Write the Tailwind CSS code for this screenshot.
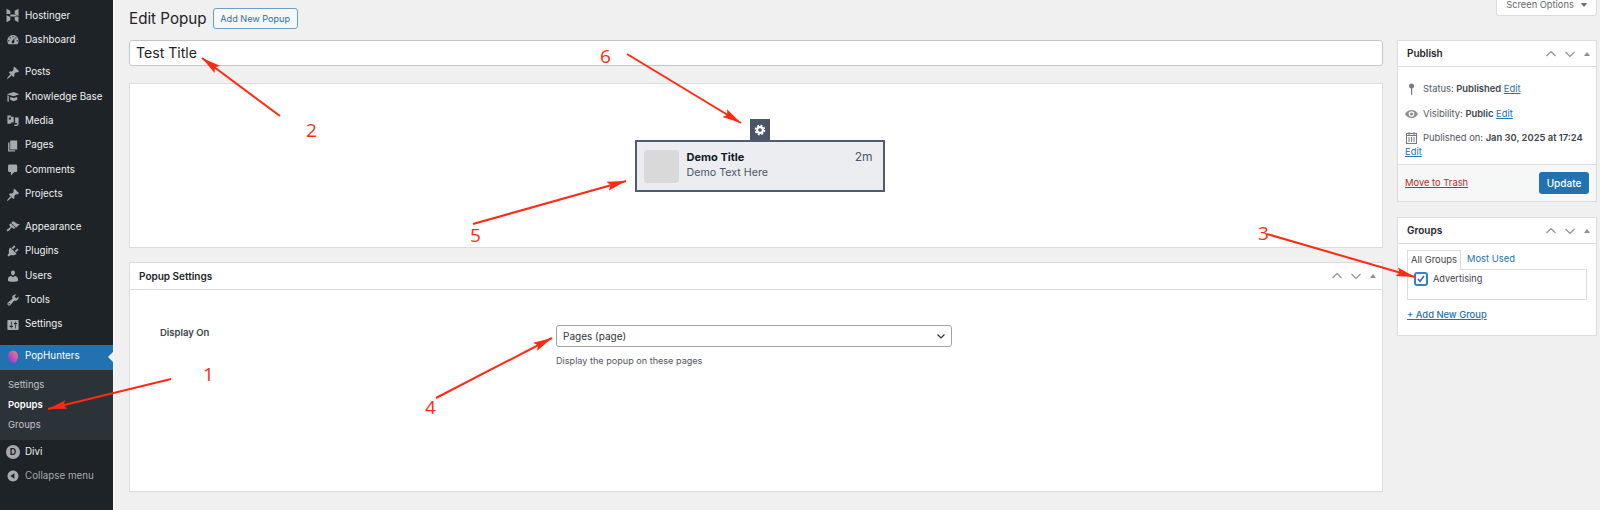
<!DOCTYPE html>
<html lang="en">
<head>
  <meta charset="UTF-8"/>
  <title>Edit Popup</title>
  <script src="https://cdn.jsdelivr.net/npm/@tailwindcss/browser@4"></script>
</head>
<body class="relative h-[510px] w-[1600px] overflow-hidden bg-[#f0f0f1] font-['Inter','Liberation_Sans',sans-serif] text-[10px] text-[#3c434a]">
  <div class="flex h-[510px]">

    <!-- Admin menu -->
    <aside class="w-[113px] shrink-0 bg-[#1d2327] pt-[4px] text-[9.8px] text-[#f0f0f1]">
      <a class="flex h-[23.8px] items-center gap-[5px] pl-[5px]">
        <svg class="h-[15px] w-[15px] fill-[#a7aaad]" viewBox="0 0 20 20"><path d="M2 1l5 2.600V8H2zM13 3.600L18 1v9.500L13 8zM2 9.500L7 12v4.400L2 19zM13 12h5v7l-5-2.600zM7 8.800h6l5 2.400H7z"/></svg>
        <span>Hostinger</span>
      </a>
      <a class="flex h-[24.4px] items-center gap-[5px] pl-[6px]">
        <svg class="h-[14px] w-[14px] fill-[#a7aaad]" viewBox="0 0 20 20"><path d="M3.76 16h12.48c1.1-1.37 1.76-3.11 1.76-5 0-4.42-3.58-8-8-8s-8 3.58-8 8c0 1.89.66 3.63 1.76 5zM10 4c.55 0 1 .45 1 1s-.45 1-1 1-1-.45-1-1 .45-1 1-1zM6 6c.55 0 1 .45 1 1s-.45 1-1 1-1-.45-1-1 .45-1 1-1zm8 0c.55 0 1 .45 1 1s-.45 1-1 1-1-.45-1-1 .45-1 1-1zm-5.37 5.55L12 7v6c0 1.1-.9 2-2 2s-2-.9-2-2c0-.57.24-1.08.63-1.45zM4 10c.55 0 1 .45 1 1s-.45 1-1 1-1-.45-1-1 .45-1 1-1zm12 0c.55 0 1 .45 1 1s-.45 1-1 1-1-.45-1-1 .45-1 1-1z"/></svg>
        <span>Dashboard</span>
      </a>

      <div class="h-[8.2px]"></div>
      <a class="flex h-[24.4px] items-center gap-[5px] pl-[6px]">
        <svg class="h-[14px] w-[14px] fill-[#a7aaad]" viewBox="0 0 20 20"><path d="M10.44 3.02l1.82-1.82 6.36 6.35-1.83 1.82c-1.05-.68-2.48-.57-3.41.36l-.75.75c-.92.93-1.04 2.35-.35 3.41l-1.83 1.82-2.41-2.41-2.8 2.79c-.42.42-3.38 2.71-3.8 2.29s1.86-3.39 2.28-3.81l2.79-2.79L4.1 9.36l1.83-1.82c1.05.69 2.48.57 3.4-.36l.75-.75c.93-.92 1.05-2.35.36-3.41z"/></svg>
        <span>Posts</span>
      </a>
      <a class="flex h-[24.4px] items-center gap-[5px] pl-[6px]">
        <svg class="h-[14px] w-[14px] fill-[#a7aaad]" viewBox="0 0 20 20"><path d="M1 6l10-3 8 3-8 3zM2 7.500v8.500l1 1 1-1V8.200zM6 10l5 1.500 5-1.500v4l-5 2-5-2z"/></svg>
        <span>Knowledge Base</span>
      </a>
      <a class="flex h-[24.4px] items-center gap-[5px] pl-[6px]">
        <svg class="h-[14px] w-[14px] fill-[#a7aaad]" viewBox="0 0 20 20"><path fill-rule="evenodd" d="M2 2h5v2h4v8H7v2H2zM4 4v4h3V5H4zM13 5h5v9c0 1.500-1 3-3 3h-3v-2h2c1 0 2-.5 2-1v-1h-3z"/></svg>
        <span>Media</span>
      </a>
      <a class="flex h-[24.4px] items-center gap-[5px] pl-[6px]">
        <svg class="h-[14px] w-[14px] fill-[#a7aaad]" viewBox="0 0 20 20"><path d="M6 15V2h10v13H6zm-1 1h8v2H3V5h2v11z"/></svg>
        <span>Pages</span>
      </a>
      <a class="flex h-[24.4px] items-center gap-[5px] pl-[6px]">
        <svg class="h-[14px] w-[14px] fill-[#a7aaad]" viewBox="0 0 20 20"><path d="M5 2h9c1.1 0 2 .9 2 2v7c0 1.1-.9 2-2 2h-2l-5 5v-5H5c-1.1 0-2-.9-2-2V4c0-1.1.9-2 2-2z"/></svg>
        <span>Comments</span>
      </a>
      <a class="flex h-[24.4px] items-center gap-[5px] pl-[6px]">
        <svg class="h-[14px] w-[14px] fill-[#a7aaad]" viewBox="0 0 20 20"><path d="M10.44 3.02l1.82-1.82 6.36 6.35-1.83 1.82c-1.05-.68-2.48-.57-3.41.36l-.75.75c-.92.93-1.04 2.35-.35 3.41l-1.83 1.82-2.41-2.41-2.8 2.79c-.42.42-3.38 2.71-3.8 2.29s1.86-3.39 2.28-3.81l2.79-2.79L4.1 9.36l1.83-1.82c1.05.69 2.48.57 3.4-.36l.75-.75c.93-.92 1.05-2.35.36-3.41z"/></svg>
        <span>Projects</span>
      </a>

      <div class="h-[8.2px]"></div>
      <a class="flex h-[24.4px] items-center gap-[5px] pl-[6px]">
        <svg class="h-[14px] w-[14px] fill-[#a7aaad]" viewBox="0 0 20 20"><path d="M14.48 11.06L7.41 3.99l1.5-1.5c.5-.56 2.3-.47 3.51.32 1.21.8 1.43 1.28 2.91 2.1 1.18.64 2.45 1.26 4.45.85zm-.71.71L6.7 4.7 4.93 6.47c-.39.39-.39 1.02 0 1.41l1.06 1.06c.39.39.39 1.03 0 1.42-.6.6-1.43 1.11-2.21 1.69-.35.26-.7.53-1.01.84C1.43 13.23.4 14.98 1.25 15.83s2.6-.18 3.94-1.52c.31-.31.58-.66.84-1.01.58-.78 1.09-1.61 1.69-2.21.39-.39 1.02-.39 1.41 0l1.06 1.06c.39.39 1.02.39 1.41 0z"/></svg>
        <span>Appearance</span>
      </a>
      <a class="flex h-[24.4px] items-center gap-[5px] pl-[6px]">
        <svg class="h-[14px] w-[14px] fill-[#a7aaad]" viewBox="0 0 20 20"><path d="M13.11 4.36L9.87 7.6 8 5.73l3.24-3.24c.35-.34 1.05-.2 1.56.32.52.51.66 1.21.31 1.55zm-8 1.77l.91-1.12 9.01 9.01-1.19.84c-.71.71-2.63 1.16-3.82 1.16H6.14L4.9 17.26c-.59.59-1.54.59-2.12 0-.59-.58-.59-1.53 0-2.12l1.24-1.24v-3.88c0-1.13.4-3.19 1.09-3.89zm7.26 3.97l3.24-3.24c.34-.35 1.04-.21 1.55.31.52.51.66 1.21.31 1.55l-3.24 3.25z"/></svg>
        <span>Plugins</span>
      </a>
      <a class="flex h-[24.4px] items-center gap-[5px] pl-[6px]">
        <svg class="h-[14px] w-[14px] fill-[#a7aaad]" viewBox="0 0 20 20"><path d="M10 9.25c-2.27 0-2.73-3.44-2.73-3.44C7 4.02 7.82 2 9.97 2c2.16 0 2.98 2.02 2.71 3.81 0 0-.41 3.44-2.68 3.44zm0 2.57L12.72 10c2.39 0 4.52 2.33 4.52 4.53v2.49s-3.65 1.13-7.24 1.13c-3.65 0-7.24-1.13-7.24-1.13v-2.49c0-2.25 1.94-4.48 4.47-4.48z"/></svg>
        <span>Users</span>
      </a>
      <a class="flex h-[24.4px] items-center gap-[5px] pl-[6px]">
        <svg class="h-[14px] w-[14px] fill-[#a7aaad]" viewBox="0 0 20 20"><path d="M16.68 9.77c-1.34 1.34-3.3 1.67-4.95.99l-5.41 6.52c-.99.99-2.59.99-3.58 0s-.99-2.59 0-3.57l6.52-5.42c-.68-1.65-.35-3.61.99-4.95 1.28-1.28 3.12-1.62 4.72-1.06l-2.89 2.89 2.82 2.82 2.86-2.87c.53 1.58.18 3.39-1.08 4.65zM3.81 16.21c.4.39 1.04.39 1.43 0 .4-.4.4-1.04 0-1.43-.39-.4-1.03-.4-1.43 0-.39.39-.39 1.03 0 1.43z"/></svg>
        <span>Tools</span>
      </a>
      <a class="flex h-[24.4px] items-center gap-[5px] pl-[6px]">
        <svg class="h-[14px] w-[14px] fill-[#a7aaad]" viewBox="0 0 20 20"><path d="M18 16V4c0-.55-.45-1-1-1H3c-.55 0-1 .45-1 1v12c0 .55.45 1 1 1h14c.55 0 1-.45 1-1zM8 11h1c.55 0 1 .45 1 1s-.45 1-1 1H8v1.5c0 .28-.22.5-.5.5s-.5-.22-.5-.5V13H6c-.55 0-1-.45-1-1s.45-1 1-1h1V5.5c0-.28.22-.5.5-.5s.5.22.5.5V11zm5-2h-1c-.55 0-1-.45-1-1s.45-1 1-1h1V5.5c0-.28.22-.5.5-.5s.5.22.5.5V7h1c.55 0 1 .45 1 1s-.45 1-1 1h-1v5.5c0 .28-.22.5-.5.5s-.5-.22-.5-.5V9z"/></svg>
        <span>Settings</span>
      </a>

      <div class="h-[7.800px]"></div>
      <a class="relative flex h-[25px] items-center gap-[5px] bg-[#2271b1] pb-[1px] pl-[6px] text-white">
        <svg class="h-[14px] w-[14px]" viewBox="0 0 20 20"><defs><linearGradient id="pop" x1="1" y1="0" x2="0" y2="1"><stop offset="0" stop-color="#f08a4b"/><stop offset="0.5" stop-color="#c94fc0"/><stop offset="1" stop-color="#4a3fd6"/></linearGradient></defs><path fill="url(#pop)" d="M10 1c4 0 7 3 7 8 0 5-3 10-7 10-4 0-7-5-7-10 0-5 3-8 7-8z"/></svg>
        <span>PopHunters</span>
        <span class="absolute right-0 top-[7px] h-0 w-0 border-y-[5.5px] border-r-[5.5px] border-y-transparent border-r-[#f0f0f1]"></span>
      </a>
      <div class="bg-[#2c3338] pb-[5px] pt-[5px] text-[9.5px] text-[#c3c4c7]">
        <a class="flex h-[20px] items-center pl-[8px]">Settings</a>
        <a class="flex h-[20px] items-center pl-[8px] font-semibold text-white">Popups</a>
        <a class="flex h-[20px] items-center pl-[8px]">Groups</a>
      </div>
      <a class="flex h-[24.4px] items-center gap-[5px] pl-[6px]">
        <span class="flex h-[14px] w-[14px] items-center justify-center rounded-full bg-[#a7aaad] text-[9px] font-bold leading-none text-[#1d2327]">D</span>
        <span>Divi</span>
      </a>
      <a class="flex h-[24.4px] items-center gap-[5px] pl-[6px] text-[#a7aaad]">
        <svg class="h-[14px] w-[14px] fill-[#a7aaad]" viewBox="0 0 20 20"><path d="M10 2.16c4.33 0 7.84 3.51 7.84 7.84s-3.51 7.84-7.84 7.84S2.16 14.33 2.16 10 5.71 2.16 10 2.16zm2 11.72V6.12L6.18 9.97z"/></svg>
        <span>Collapse menu</span>
      </a>
    </aside>

    <!-- Main content -->
    <main class="min-w-0 flex-1 border-l border-[#f9f9f9] pl-[15px] pr-[3px]">
      <div class="flex h-[40px] items-start">
        <h1 class="mt-[8px] text-[15.2px] leading-[22px] text-[#1d2327]">Edit Popup</h1>
        <a class="ml-[6px] mt-[8px] flex h-[21px] w-[85px] items-center justify-center rounded-[3px] border border-[#6a9fcc] bg-[#f6f7f7] text-[9.1px] text-[#2271b1]">Add New Popup</a>
        <div class="ml-auto flex h-[16px] w-[101px] items-center justify-center gap-[7px] rounded-b-[3px] border border-t-0 border-[#dcdcde] bg-white pb-[5px] text-[9.3px] text-[#646970]">
          Screen Options
          <span class="h-0 w-0 border-x-[3.5px] border-t-[4px] border-x-transparent border-t-[#646970]"></span>
        </div>
      </div>

      <div class="flex gap-[14px]">
        <!-- Left column -->
        <div class="w-[1254px]">
          <div class="flex h-[26px] items-center rounded-[3px] border border-[#c3c4c7] bg-white pl-[6px] text-[14.1px] text-[#1d2327]">Test Title</div>

          <div class="mt-[17px] flex h-[165px] flex-col items-center justify-start border border-[#dcdcde] bg-white pl-[7px] pt-[35px]">
            <div class="flex h-[21px] w-[20px] items-center justify-center bg-[#4a5568]">
              <svg class="h-[12px] w-[12px]" viewBox="0 0 12 12" fill="none" stroke="#fff"><circle cx="6" cy="6" r="2.9" stroke-width="2.2"/><circle cx="6" cy="6" r="4.5" stroke-width="1.6" stroke-dasharray="2 1.53"/></svg>
            </div>
            <div class="flex h-[52px] w-[250px] items-center border-2 border-[#4f5b6e] bg-[#ecedf1] pl-[7px] pr-[10px]">
              <div class="h-[33px] w-[35px] shrink-0 rounded-[4px] bg-[#d9d9d9]"></div>
              <div class="ml-[8px] flex-1 -translate-y-[1px]">
                <div class="flex items-center justify-between text-[11px] leading-[16px]">
                  <span class="font-bold text-[#111827]">Demo Title</span>
                  <span class="text-[12px] text-[#4a5568]">2m</span>
                </div>
                <div class="text-[10.7px] leading-[16px] text-[#4a5568]">Demo Text Here</div>
              </div>
            </div>
          </div>

          <section class="mt-[14px] h-[230px] border border-[#dcdcde] bg-white">
            <div class="flex h-[27px] items-center justify-between border-b border-[#dcdcde] pl-[9px] pr-[6px]">
              <h2 class="text-[10px] font-semibold text-[#1d2327]">Popup Settings</h2>
              <div class="flex items-center gap-[7px]">
                <svg class="h-[12px] w-[12px]" viewBox="0 0 12 12" fill="none" stroke="#8c8f94" stroke-width="1.2"><path d="M1.500 8L6 3.500 10.500 8"/></svg>
                <svg class="h-[12px] w-[12px]" viewBox="0 0 12 12" fill="none" stroke="#8c8f94" stroke-width="1.2"><path d="M1.500 4L6 8.500 10.500 4"/></svg>
                <span class="ml-[1.500px] h-0 w-0 border-x-[3.5px] border-b-[4px] border-x-transparent border-b-[#8c8f94]"></span>
              </div>
            </div>
            <div class="flex pt-[35px]">
              <div class="w-[426px] pl-[30px] pt-[1px] text-[9.5px] font-semibold leading-[13px] text-[#3c434a]">Display On</div>
              <div>
                <div class="flex h-[22px] w-[396px] items-center justify-between rounded-[3px] border border-[#a0a3a8] bg-white pl-[6px] pr-[5px] text-[10px] text-[#2c3338]">
                  Pages (page)
                  <svg class="h-[10px] w-[10px]" viewBox="0 0 10 10" fill="none" stroke="#2c3338" stroke-width="1.2"><path d="M1.500 3.500L5 7l3.500-3.500"/></svg>
                </div>
                <p class="mt-[7px] text-[9.1px] leading-[13px] text-[#50575e]">Display the popup on these pages</p>
              </div>
            </div>
          </section>
        </div>

        <!-- Right column -->
        <div class="w-[200px]">
          <section class="h-[162px] border border-[#dcdcde] bg-white">
            <div class="flex h-[26px] items-center justify-between border-b border-[#dcdcde] pl-[9px] pr-[6px]">
              <h2 class="text-[10px] font-semibold text-[#1d2327]">Publish</h2>
              <div class="flex items-center gap-[7px]">
                <svg class="h-[12px] w-[12px]" viewBox="0 0 12 12" fill="none" stroke="#8c8f94" stroke-width="1.2"><path d="M1.500 8L6 3.500 10.500 8"/></svg>
                <svg class="h-[12px] w-[12px]" viewBox="0 0 12 12" fill="none" stroke="#8c8f94" stroke-width="1.2"><path d="M1.500 4L6 8.500 10.500 4"/></svg>
                <span class="ml-[1.500px] h-0 w-0 border-x-[3.5px] border-b-[4px] border-x-transparent border-b-[#8c8f94]"></span>
              </div>
            </div>
            <div class="h-[97px] pl-[7px] pr-[4px] pt-[15px] text-[9.4px] leading-[14px] text-[#50575e]">
              <div class="flex h-[24.500px] items-start gap-[5px]">
                <svg class="mt-[1px] h-[12px] w-[13px]" viewBox="0 0 13 12" fill="#787c82"><circle cx="6.500" cy="3" r="2.500"/><rect x="6" y="4" width="1.200" height="8"/></svg>
                <span>Status: <b class="font-semibold text-[#3c434a]">Published</b> <a class="text-[#2271b1] underline">Edit</a></span>
              </div>
              <div class="flex h-[24.500px] items-start gap-[5px]">
                <svg class="mt-[1px] h-[12px] w-[13px]" viewBox="0 0 13 12" fill="#8c8f94"><path fill-rule="evenodd" d="M0 6c1.500-2.500 3.800-4 6.500-4S11.500 3.500 13 6c-1.500 2.500-3.800 4-6.500 4S1.500 8.500 0 6zm6.500 2.800a2.800 2.800 0 100-5.600 2.800 2.800 0 000 5.600z"/><circle cx="6.500" cy="6" r="1.600"/></svg>
                <span>Visibility: <b class="font-semibold text-[#3c434a]">Public</b> <a class="text-[#2271b1] underline">Edit</a></span>
              </div>
              <div class="flex items-start gap-[5px]">
                <svg class="mt-[1px] h-[12px] w-[13px] shrink-0" viewBox="0 0 13 12" fill="none" stroke="#787c82"><rect x="1.500" y="1.500" width="10" height="10"/><path d="M1.500 3.500h10M4 0v3M9 0v3M4 5v5M6.500 5v5M9 5v5"/></svg>
                <span class="whitespace-nowrap">Published on: <b class="font-semibold text-[#3c434a]">Jan 30, 2025 at 17:24</b></span>
              </div>
              <a class="text-[#2271b1] underline">Edit</a>
            </div>
            <div class="flex h-[37px] items-center justify-between border-t border-[#dcdcde] bg-[#f6f7f7] px-[7px]">
              <a class="text-[9.4px] text-[#b32d2e] underline">Move to Trash</a>
              <button class="h-[22px] w-[50px] rounded-[3px] bg-[#2271b1] text-[10px] font-medium text-white">Update</button>
            </div>
          </section>

          <section class="mt-[15px] h-[119px] border border-[#dcdcde] bg-white">
            <div class="flex h-[26px] items-center justify-between border-b border-[#dcdcde] pl-[9px] pr-[6px]">
              <h2 class="text-[10px] font-semibold text-[#1d2327]">Groups</h2>
              <div class="flex items-center gap-[7px]">
                <svg class="h-[12px] w-[12px]" viewBox="0 0 12 12" fill="none" stroke="#8c8f94" stroke-width="1.2"><path d="M1.500 8L6 3.500 10.500 8"/></svg>
                <svg class="h-[12px] w-[12px]" viewBox="0 0 12 12" fill="none" stroke="#8c8f94" stroke-width="1.2"><path d="M1.500 4L6 8.500 10.500 4"/></svg>
                <span class="ml-[1.500px] h-0 w-0 border-x-[3.5px] border-b-[4px] border-x-transparent border-b-[#8c8f94]"></span>
              </div>
            </div>
            <div class="px-[9px] pt-[5px]">
              <div class="flex h-[20px] items-stretch text-[9.4px]">
                <span class="relative top-[1px] flex w-[54px] items-center justify-center border border-b-0 border-[#dcdcde] bg-white text-[#3c434a]">All Groups</span>
                <span class="ml-[6px] flex items-center text-[#2271b1]">Most Used</span>
              </div>
              <div class="flex h-[31px] items-start gap-[5px] border border-[#dcdcde] pl-[6px] pt-[2px] text-[9.2px] leading-[12px]">
                <span class="flex h-[14px] w-[14px] items-center justify-center rounded-[3px] border-2 border-[#3582c4] bg-white">
                  <svg class="h-[10px] w-[10px]" viewBox="0 0 10 10" fill="none" stroke="#2271b1" stroke-width="1.6"><path d="M2 5l2 2.200L8 2"/></svg>
                </span>
                <span class="mt-[1px]">Advertising</span>
              </div>
              <a class="mt-[8px] block text-[9.4px] font-medium leading-[14px] text-[#2271b1] underline">+ Add New Group</a>
            </div>
          </section>
        </div>
      </div>
    </main>
  </div>

  <!-- Red annotations drawn over the screenshot -->
  <svg class="pointer-events-none absolute left-0 top-0" width="1600" height="510" fill="none" stroke="#ff2a12" stroke-width="2">
    <defs>
      <marker id="head" markerUnits="userSpaceOnUse" markerWidth="20" markerHeight="12" refX="19" refY="6" orient="auto">
        <path d="M0 1.500L19 6 0 10.500 3 6z" fill="#ff2a12" stroke="none"/>
      </marker>
    </defs>
    <line x1="171" y1="379" x2="48" y2="409" marker-end="url(#head)"/>
    <line x1="280" y1="116" x2="202" y2="58" marker-end="url(#head)"/>
    <line x1="1267" y1="234" x2="1415" y2="277" marker-end="url(#head)"/>
    <line x1="436" y1="398" x2="552" y2="338" marker-end="url(#head)"/>
    <line x1="473" y1="224" x2="626" y2="181" marker-end="url(#head)"/>
    <line x1="627" y1="54" x2="741" y2="123" marker-end="url(#head)"/>
  </svg>
  <span class="absolute left-[203px] top-[361px] font-['Open_Sans',sans-serif] text-[19px] leading-[26px] text-[#ff2a12]">1</span>
  <span class="absolute left-[306px] top-[117px] font-['Open_Sans',sans-serif] text-[19px] leading-[26px] text-[#ff2a12]">2</span>
  <span class="absolute left-[1258px] top-[220px] font-['Open_Sans',sans-serif] text-[19px] leading-[26px] text-[#ff2a12]">3</span>
  <span class="absolute left-[425px] top-[394px] font-['Open_Sans',sans-serif] text-[19px] leading-[26px] text-[#ff2a12]">4</span>
  <span class="absolute left-[470px] top-[222px] font-['Open_Sans',sans-serif] text-[19px] leading-[26px] text-[#ff2a12]">5</span>
  <span class="absolute left-[600px] top-[43px] font-['Open_Sans',sans-serif] text-[19px] leading-[26px] text-[#ff2a12]">6</span>
</body>
</html>
